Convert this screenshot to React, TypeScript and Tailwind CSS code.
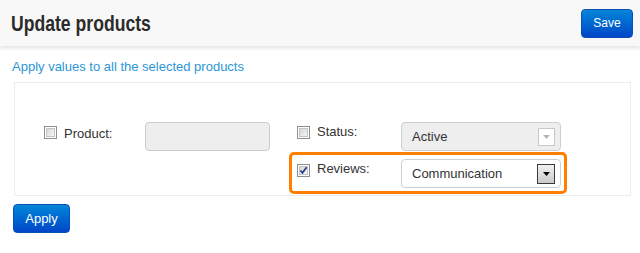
import React from "react";

function Checkbox({ checked = false }: { checked?: boolean }) {
  return (
    <div className="relative w-[13px] h-[13px] border border-[#8e8f8f] bg-white shrink-0">
      <div className="absolute inset-[1px] border border-[#c4c4c4] bg-gradient-to-br from-[#d6d6d6] to-[#f6f6f6]" />
      {checked && (
        <svg className="absolute left-[1px] top-[1px]" width="9" height="9" viewBox="0 0 9 9">
          <path d="M1.5 4.5 L3.5 6.8 L7.6 1.2" fill="none" stroke="#2b3b8f" strokeWidth="1.7" />
        </svg>
      )}
    </div>
  );
}

function Select({ value, disabled = false }: { value: string; disabled?: boolean }) {
  return (
    <div
      className={
        "w-[160px] h-[29px] rounded-[4px] border border-[#cfcfcf] flex items-center justify-between pl-[10px] pr-[5px] text-[13px] text-[#333] " +
        (disabled ? "bg-[#eeeeee]" : "bg-white")
      }
    >
      <span>{value}</span>
      {disabled ? (
        <div className="w-[17px] h-[18px] border border-[#c8c8c8] bg-white flex items-center justify-center">
          <svg width="7" height="4" viewBox="0 0 7 4">
            <path d="M0 0 L7 0 L3.5 4 Z" fill="#b5b5b5" />
          </svg>
        </div>
      ) : (
        <div className="w-[18px] h-[20px] border border-[#3a3a3a] bg-gradient-to-b from-[#f2f2f2] to-[#c9c9c9] flex items-center justify-center">
          <svg width="7" height="4" viewBox="0 0 7 4">
            <path d="M0 0 L7 0 L3.5 4 Z" fill="#000" />
          </svg>
        </div>
      )}
    </div>
  );
}

export default function App() {
  return (
    <div className="w-[640px] h-[253px] bg-white font-['Liberation_Sans',Arial,sans-serif] text-[13px] text-[#333] overflow-hidden">
      <div className="h-[46px] bg-[#f8f8f8] flex items-center justify-between pl-[11px] pr-[7px] shadow-[0_2px_4px_rgba(0,0,0,0.12)]">
        <h1 className="font-['Liberation_Sans',Arial,sans-serif] font-bold text-[22px] leading-none text-[#2b2b2b] mt-[1px] scale-x-[0.8] origin-left">
          Update products
        </h1>
        <button className="w-[52px] h-[29px] rounded-[4px] border border-[#0a4fb8] bg-gradient-to-b from-[#0a85d8] to-[#0445c8] text-white text-[12px] flex items-center justify-center">
          Save
        </button>
      </div>

      <div className="pl-[12px] pt-[13px] leading-[15px] text-[#2b96d8]">
        Apply values to all the selected products
      </div>

      <div className="ml-[14px] mt-[8px] w-[617px] h-[114px] border border-[#ececec] flex pt-[39px]">
        <div className="flex items-start pl-[29px] w-[274px]">
          <div className="mt-[4px]">
            <Checkbox />
          </div>
          <span className="ml-[7px] mt-[4px] leading-[15px] w-[81px]">Product:</span>
          <div className="w-[125px] h-[29px] rounded-[4px] border border-[#cccccc] bg-[#eeeeee]" />
        </div>
        <div className="flex flex-col">
          <div className="flex items-start pl-[8px]">
            <div className="mt-[4px]">
              <Checkbox />
            </div>
            <span className="ml-[7px] mt-[2px] leading-[15px] w-[84px]">Status:</span>
            <Select value="Active" disabled />
          </div>
          <div className="mt-[1px] w-[278px] border-[3px] border-[#ff8000] rounded-[5px] flex items-start pl-[5px] pt-[4px] pb-[3px]">
            <div className="mt-[5px]">
              <Checkbox checked />
            </div>
            <span className="ml-[7px] mt-[2px] leading-[15px] w-[84px]">Reviews:</span>
            <Select value="Communication" />
          </div>
        </div>
      </div>

      <button className="ml-[13px] mt-[8px] w-[57px] h-[29px] rounded-[4px] border border-[#0a4fb8] bg-gradient-to-b from-[#0a85d8] to-[#0445c8] text-white text-[13px] flex items-center justify-center">
        Apply
      </button>
    </div>
  );
}
